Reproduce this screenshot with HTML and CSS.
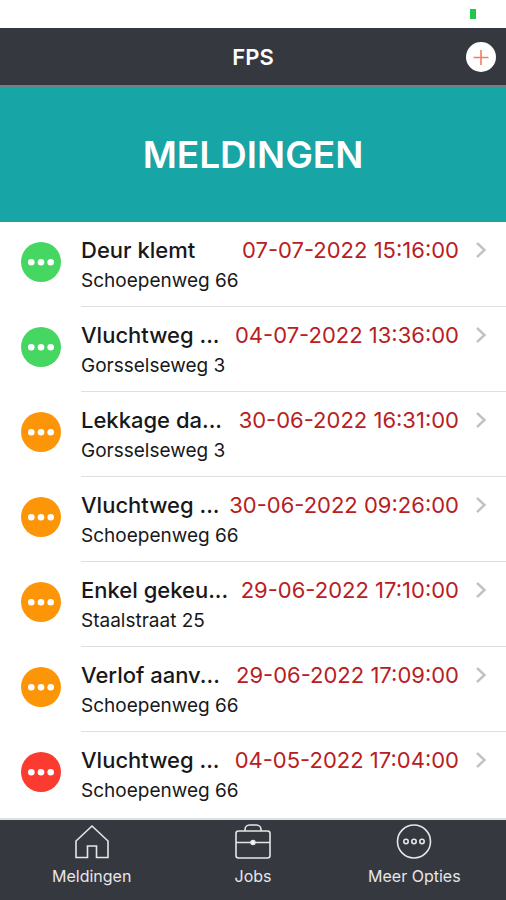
FILE: index.html
```html
<!DOCTYPE html>
<html lang="nl">
<head>
<meta charset="utf-8">
<meta name="viewport" content="width=device-width, initial-scale=1">
<title>FPS</title>
<link rel="stylesheet" href="styles.css">
</head>
<body>
<svg class="defs" width="0" height="0" aria-hidden="true">
  <symbol id="dots" viewBox="0 0 40 40">
    <circle cx="20" cy="20" r="20" fill="currentColor"/>
    <g fill="#fff"><circle cx="10.3" cy="20.3" r="3.3"/><circle cx="20" cy="20.3" r="3.3"/><circle cx="29.7" cy="20.3" r="3.3"/></g>
  </symbol>
  <symbol id="chevron" viewBox="0 0 12 18">
    <path d="M2 2l7.5 7L2 16" fill="none" stroke="#c2c2c4" stroke-width="2.4"/>
  </symbol>
</svg>
<div class="status"><span class="battery"></span></div>
<header class="bar">
  <h1 class="bar-title">FPS</h1>
  <button class="add" type="button" aria-label="+">
    <svg width="30" height="30" viewBox="0 0 30 30"><circle cx="15" cy="15" r="15" fill="#fff"/><path d="M7.5 15.5h15M15 8v15" stroke="#ee7f63" stroke-width="1.6"/></svg>
  </button>
</header>
<div class="banner"><h2 class="banner-title">MELDINGEN</h2></div>
<main class="list">
  <a class="row" href="#"><svg class="state green"><use href="#dots"/></svg><span class="body"><span class="top"><span class="name">Deur klemt</span><span class="date">07-07-2022 15:16:00</span><svg class="chevron"><use href="#chevron"/></svg></span><span class="place">Schoepenweg 66</span></span></a>
  <a class="row" href="#"><svg class="state green"><use href="#dots"/></svg><span class="body"><span class="top"><span class="name">Vluchtweg ...</span><span class="date">04-07-2022 13:36:00</span><svg class="chevron"><use href="#chevron"/></svg></span><span class="place">Gorsselseweg 3</span></span></a>
  <a class="row" href="#"><svg class="state orange"><use href="#dots"/></svg><span class="body"><span class="top"><span class="name">Lekkage da...</span><span class="date">30-06-2022 16:31:00</span><svg class="chevron"><use href="#chevron"/></svg></span><span class="place">Gorsselseweg 3</span></span></a>
  <a class="row" href="#"><svg class="state orange"><use href="#dots"/></svg><span class="body"><span class="top"><span class="name">Vluchtweg ...</span><span class="date">30-06-2022 09:26:00</span><svg class="chevron"><use href="#chevron"/></svg></span><span class="place">Schoepenweg 66</span></span></a>
  <a class="row" href="#"><svg class="state orange"><use href="#dots"/></svg><span class="body"><span class="top"><span class="name">Enkel gekeu...</span><span class="date">29-06-2022 17:10:00</span><svg class="chevron"><use href="#chevron"/></svg></span><span class="place">Staalstraat 25</span></span></a>
  <a class="row" href="#"><svg class="state orange"><use href="#dots"/></svg><span class="body"><span class="top"><span class="name">Verlof aanv...</span><span class="date">29-06-2022 17:09:00</span><svg class="chevron"><use href="#chevron"/></svg></span><span class="place">Schoepenweg 66</span></span></a>
  <a class="row" href="#"><svg class="state red"><use href="#dots"/></svg><span class="body"><span class="top"><span class="name">Vluchtweg ...</span><span class="date">04-05-2022 17:04:00</span><svg class="chevron"><use href="#chevron"/></svg></span><span class="place">Schoepenweg 66</span></span></a>
</main>
<nav class="tabs">
  <a class="tab" href="#">
    <svg class="tab-icon" viewBox="0 0 36 36"><path d="M2 33.5V17L18 2l16 15v16.500H22.500V22h-9v11.500z"/></svg>
    <span>Meldingen</span>
  </a>
  <a class="tab" href="#">
    <svg class="tab-icon" viewBox="0 0 36 36"><rect x="1" y="7" width="34" height="27" rx="2.5"/><path d="M10 7V5.500c0-2.500 2-4.500 4.500-4.500h7c2.500 0 4.500 2 4.500 4.500V7M1 18.500h34"/><circle class="solid" cx="18" cy="18.500" r="2"/></svg>
    <span>Jobs</span>
  </a>
  <a class="tab" href="#">
    <svg class="tab-icon" viewBox="0 0 36 36"><circle cx="18" cy="17.500" r="16.500"/><circle cx="10" cy="17.500" r="2.200"/><circle cx="18" cy="17.500" r="2.200"/><circle cx="26" cy="17.500" r="2.200"/></svg>
    <span>Meer Opties</span>
  </a>
</nav>
</body>
</html>
```
FILE: styles.css
```css
* { box-sizing: border-box; }

body {
  margin: 0;
  min-height: 100vh;
  display: flex;
  flex-direction: column;
  background: #fff;
  color: #18181a;
  font-family: Inter, "Liberation Sans", sans-serif;
}

h1, h2 { margin: 0; }
a { color: inherit; text-decoration: none; }
.defs { position: absolute; }

.status {
  height: 28px;
  padding: 9px 30px 0;
  display: flex;
  justify-content: flex-end;
}
.battery { width: 6px; height: 10px; background: #22c64e; }

.bar {
  height: 59px;
  padding: 0 10px;
  display: grid;
  grid-template-columns: 30px 1fr 30px;
  align-items: center;
  background: #363840;
  border-bottom: 2px solid #6f8188;
}
.bar-title {
  grid-column: 2;
  text-align: center;
  color: #fff;
  font-size: 22px;
  line-height: 28px;
  font-weight: 600;
}
.add {
  width: 30px;
  height: 30px;
  padding: 0;
  border: 0;
  background: none;
}
.add svg { display: block; }

.banner {
  height: 135px;
  display: flex;
  align-items: center;
  justify-content: center;
  background: #17a5a6;
}
.banner-title {
  color: #fff;
  font-size: 37px;
  line-height: 44px;
  font-weight: 600;
}

.list { flex: 1; }
.row {
  display: flex;
  height: 85px;
  padding-left: 21px;
  gap: 20px;
}
.state { width: 40px; height: 40px; margin-top: 20px; flex: none; }
.green { color: #46d763; }
.orange { color: #fd9509; }
.red { color: #fb3b30; }

.body {
  flex: 1;
  min-width: 0;
  padding: 13px 19px 0 0;
  border-bottom: 1px solid #dfdfe1;
}
.row:last-child .body { border-bottom: 0; }
.top { display: flex; align-items: center; line-height: 30px; font-size: 22px; }
.name { flex: 1; min-width: 0; white-space: nowrap; font-weight: 500; }
.date { color: #b8201f; white-space: nowrap; }
.chevron { width: 12px; height: 18px; margin-left: 16px; flex: none; }
.place { display: block; font-size: 19px; line-height: 32px; }

.tabs {
  height: 82px;
  padding: 4px 11px 0;
  display: grid;
  grid-template-columns: repeat(3, 1fr);
  background: #363840;
  border-top: 2px solid #dcdfe3;
}
.tab {
  display: flex;
  flex-direction: column;
  align-items: center;
  gap: 4px;
  color: #e6e6e8;
  font-size: 16px;
  line-height: 24px;
}
.tab-icon {
  width: 36px;
  height: 36px;
  fill: none;
  stroke: #e6e6e8;
  stroke-width: 1.6;
}
.tab-icon .solid { fill: #fff; }
```
